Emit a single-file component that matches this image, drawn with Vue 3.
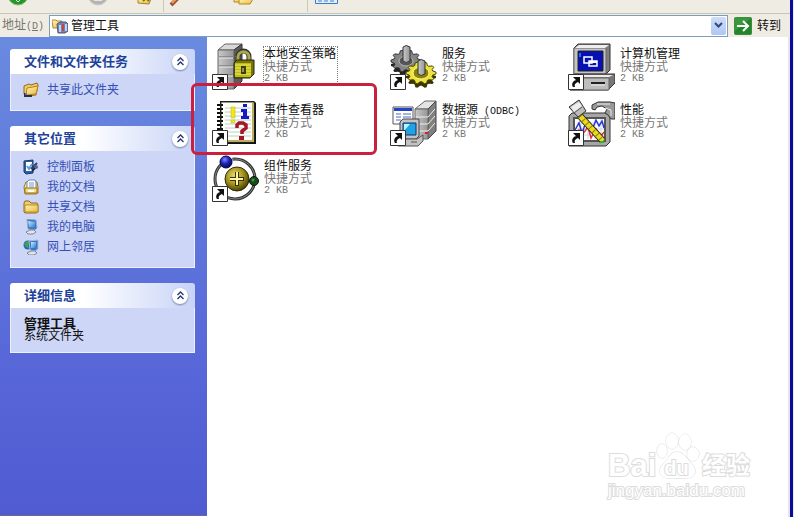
<script setup>
import { ref } from 'vue'

const address = ref('管理工具')

const panels = ref([
  {
    title: '文件和文件夹任务',
    open: true,
    links: [{ icon: 'share', text: '共享此文件夹' }]
  },
  {
    title: '其它位置',
    open: true,
    links: [
      { icon: 'control', text: '控制面板' },
      { icon: 'documents', text: '我的文档' },
      { icon: 'folder', text: '共享文档' },
      { icon: 'computer', text: '我的电脑' },
      { icon: 'network', text: '网上邻居' }
    ]
  },
  {
    title: '详细信息',
    open: true,
    details: { name: '管理工具', kind: '系统文件夹' }
  }
])

const files = [
  { icon: 'security', name: '本地安全策略', focused: true },
  { icon: 'services', name: '服务' },
  { icon: 'management', name: '计算机管理' },
  { icon: 'events', name: '事件查看器', marked: true },
  { icon: 'odbc', name: '数据源', suffix: ' (ODBC)' },
  { icon: 'performance', name: '性能' },
  { icon: 'components', name: '组件服务' }
]

const gearPath = (cx, cy, rx, ry, teeth) => {
  const points = []
  for (let i = 0; i < teeth * 4; i++) {
    const a = ((i - 0.5) / (teeth * 4)) * Math.PI * 2
    const k = i % 4 < 2 ? 1 : 0.8
    points.push(`${(cx + Math.cos(a) * rx * k).toFixed(1)},${(cy + Math.sin(a) * ry * k).toFixed(1)}`)
  }
  return `M${points.join('L')}Z`
}
const grayGear = gearPath(17, 18, 15, 11, 10)
const yellowGear = gearPath(32, 30, 15, 11, 10)
</script>

<template>
  <div class="window">
    <svg class="defs" aria-hidden="true">
      <defs>
        <linearGradient id="metal" x1="0" x2="1"><stop stop-color="#cacaca" /><stop offset="1" stop-color="#959595" /></linearGradient>
        <linearGradient id="gold" x1="0" y1="0" x2="1" y2="1"><stop stop-color="#fff6b0" /><stop offset="1" stop-color="#e9b840" /></linearGradient>
        <linearGradient id="glass" x1="0" y1="0" x2="1" y2="1"><stop stop-color="#c5edff" /><stop offset="1" stop-color="#2a77d2" /></linearGradient>
        <radialGradient id="sphere" cx=".4" cy=".35" r=".7"><stop stop-color="#e8dc6a" /><stop offset=".55" stop-color="#a08d18" /><stop offset="1" stop-color="#3b3403" /></radialGradient>
        <radialGradient id="blueball" cx=".4" cy=".3" r=".7"><stop stop-color="#7d8cff" /><stop offset=".5" stop-color="#1c22c0" /><stop offset="1" stop-color="#080850" /></radialGradient>
      </defs>

      <symbol id="file-security" viewBox="0 0 48 48">
        <path d="M7 7L14 1H31L23 7Z" fill="#d8d8d8" stroke="#666" />
        <path d="M23 7L31 1V38L23 46Z" fill="#5d5d5d" stroke="#333" />
        <path d="M7 7H23V46H7Z" fill="url(#metal)" stroke="#666" />
        <path d="M8 14H22M8 23H22M8 32H22" stroke="#666" />
        <path d="M8 15H22M8 24H22M8 33H22" stroke="#ededed" />
        <path d="M24 14L30 8M24 23L30 17M24 32L30 27" stroke="#999" />
        <path d="M17 42H21" stroke="#e02020" stroke-width="2" />
        <path d="M27 20V14C27 6 38 6 38 14V20" fill="none" stroke="#333" stroke-width="5" />
        <path d="M27 20V14C27 7 38 7 38 14V20" fill="none" stroke="#a9a94c" stroke-width="3" />
        <path d="M23 20L26 17H43V31L39 35H23Z" fill="#7a7700" stroke="#222" />
        <path d="M24 20H40V34H24Z" fill="#bdba1c" />
        <path d="M24 22H40M24 25H40M24 28H40M24 31H40" stroke="#efec5c" />
        <path d="M30 23H35V31H30Z" fill="#424000" /><path d="M32 25V29" stroke="#ddd" />
      </symbol>

      <symbol id="file-events" viewBox="0 0 48 48">
        <path d="M9 2H43L45 4V45H9Z" fill="#111" />
        <path d="M10 3H43V43H10Z" fill="#fffff4" stroke="#333" />
        <path d="M42 4V42H12" fill="none" stroke="#b8b060" stroke-width="2" />
        <path d="M14 9H40M14 13H40M14 17H40M14 21H40M14 25H40M14 29H40M14 33H40M14 37H40" stroke="#b9cede" />
        <path d="M6 6H12M6 10H12M6 14H12M6 18H12M6 22H12M6 26H12M6 30H12" stroke="#111" stroke-width="2" stroke-dasharray="3 1" />
        <path d="M20 8H24V19H20ZM20 21H24V24H20Z" fill="#f4e719" stroke="#b9af20" stroke-width=".5" />
        <path d="M32 5H36V8H32ZM30 10H36V17H38V20H30V17H32V13H30Z" fill="#1718c7" />
        <path d="M26 29V26L28 24H32L35 26V29L31 32V35" fill="none" stroke="#a41628" stroke-width="3.5" /><path d="M28 37H33V41H28Z" fill="#a41628" />
      </symbol>

      <symbol id="file-components" viewBox="0 0 48 48">
        <ellipse cx="24" cy="24" rx="20" ry="20" fill="none" stroke="#333" stroke-width="3" stroke-dasharray="46 3 39 3 35 3" />
        <ellipse cx="24" cy="24" rx="20" ry="20" fill="none" stroke="#858585" />
        <circle cx="26" cy="24" r="12" fill="url(#sphere)" stroke="#302b0b" />
        <path d="M26 17V31M19 24H33" stroke="#393108" stroke-width="4" /><path d="M26 17V30M19 24H32" stroke="#fff5a4" stroke-width="2" />
        <circle cx="15" cy="7" r="6" fill="url(#blueball)" stroke="#050530" />
        <circle cx="43" cy="26" r="4.5" fill="#164c18" stroke="#061606" /><circle cx="42" cy="25" r="1.5" fill="#429743" />
      </symbol>

      <symbol id="file-services" viewBox="0 0 48 48">
        <path :d="grayGear" transform="translate(0 4)" fill="#222" />
        <path :d="grayGear" fill="#858585" stroke="#333" />
        <ellipse cx="17" cy="18" rx="7" ry="5" fill="#555" stroke="#bbb" />
        <path d="M14 4Q17 1 21 4V18Q17 21 14 18Z" fill="url(#metal)" stroke="#333" />
        <path :d="yellowGear" transform="translate(0 4)" fill="#3b3600" />
        <path :d="yellowGear" fill="#eee23c" stroke="#4a4600" />
        <ellipse cx="32" cy="30" rx="8" ry="6" fill="#8b8300" stroke="#fff8a0" />
        <path d="M29 18Q32 15 36 18V31Q32 34 29 31Z" fill="url(#metal)" stroke="#333" />
      </symbol>

      <symbol id="file-odbc" viewBox="0 0 48 48">
        <path d="M4 8H24V25H4Z" fill="#fff" stroke="#555" /><path d="M5 9H23V12H5Z" fill="#2444c5" />
        <path d="M7 15H12M7 18H12M7 21H12M14 15H22M14 18H22M14 21H22" stroke="#4e68b8" />
        <path d="M26 10L36 2H47L39 10Z" fill="#e4e4e4" stroke="#666" />
        <path d="M39 10L47 2V32L39 40Z" fill="#808080" stroke="#444" />
        <path d="M26 10H39V40H26Z" fill="url(#metal)" stroke="#666" />
        <path d="M27 18H39L46 10M27 25H39L46 17M27 32H39L46 24" fill="none" stroke="#eee" />
        <path d="M36 34H39" stroke="#e11d1d" stroke-width="2" />
        <path d="M11 23L14 20H30V37L27 40H11Z" fill="#c4c4c4" stroke="#444" />
        <path d="M14 24H27V36H14Z" fill="#1da3e6" stroke="#113166" /><path d="M15 25L21 25L15 32Z" fill="#bdf2ff" />
        <path d="M13 40H28L34 36V42L29 47H9V43Z" fill="#c2c2c2" stroke="#555" /><path d="M22 43H28" stroke="#555" />
      </symbol>

      <symbol id="file-management" viewBox="0 0 48 48">
        <path d="M7 5L11 1H43V27L38 32H7Z" fill="#808080" stroke="#333" />
        <path d="M7 5H39V31H7Z" fill="#c5c5c5" stroke="#666" /><path d="M8 5L12 2H42L38 5Z" fill="#eee" />
        <path d="M11 8H36V28H11Z" fill="#0711b3" stroke="#222" />
        <path d="M17 14H25V20H17ZM22 18H30V23H22Z" fill="#0711b3" stroke="#fff" stroke-width="1.5" /><path d="M22 18H30V20H22Z" fill="#fff" />
        <path d="M13 10L13 14" stroke="#59c6fc" />
        <path d="M3 34L8 31H48V40L41 47H3Z" fill="#777" stroke="#333" />
        <path d="M3 35H42V47H3Z" fill="#bcbcbc" stroke="#666" /><path d="M5 34L10 32H46L42 34Z" fill="#eee" />
        <path d="M24 40H38" stroke="#222" stroke-width="2" /><path d="M24 42H38" stroke="#eee" />
      </symbol>

      <symbol id="file-performance" viewBox="0 0 48 48">
        <path d="M2 17L5 14H43V43L39 47H2Z" fill="#a6a6a6" stroke="#333" />
        <path d="M7 19H38V42H7Z" fill="#fff" stroke="#555" stroke-width="2" />
        <path d="M10 24H37M10 30H37M10 36H37M14 20V40M21 20V40M28 20V40M34 20V40" stroke="#ccd3e3" />
        <path d="M8 31L12 24L15 34L19 23L25 31L29 21L32 27L35 22L37 29" fill="none" stroke="#2638d2" stroke-width="1.5" />
        <path d="M8 38L12 31L15 36L21 28L24 39L29 30L34 37L37 33" fill="none" stroke="#e53036" stroke-width="1.5" />
        <path d="M13 17L36 42" stroke="#222" stroke-width="7" /><path d="M13 17L36 42" stroke="#eadb20" stroke-width="5" /><path d="M13 17L36 42" stroke="#8c7f00" stroke-width="5" stroke-dasharray="1 4" />
        <path d="M2 8L12 1L19 12L11 18Z" fill="#bdbdbd" stroke="#333" /><path d="M4 8L12 3L15 7L7 13Z" fill="#eee" /><path d="M7 14L15 8" stroke="#555" />
        <path d="M25 10V6L31 3H43L48 4V20H44L41 16L38 14L40 10L35 7L30 8L28 11Z" fill="#999" stroke="#333" /><path d="M30 5H43M38 9L44 11V17" fill="none" stroke="#eee" />
        <path d="M33 43H37" stroke="#23b934" stroke-width="2" />
      </symbol>

      <symbol id="shortcut" viewBox="0 0 16 16">
        <path d="M.5 .5H15.5V15.5H.5Z" fill="#fff" stroke="#333" />
        <path d="M5 3H12V10L10 8C7 9 6 11 7 13H5C3 10 5 7 8 6Z" fill="#111" />
      </symbol>

      <symbol id="place-share" viewBox="0 0 16 16">
        <path d="M1 4L6 2L8 3L14 1L15 3L13 13L4 14L1 12Z" fill="#f0cf68" stroke="#8c6a20" />
        <path d="M4 6L15 4L13 12L3 13Z" fill="url(#gold)" stroke="#b5811b" /><path d="M1 11H4V13H9V15H1Z" fill="#2d303d" /><path d="M2 12H4" stroke="#aebddb" />
      </symbol>
      <symbol id="place-control" viewBox="0 0 16 16">
        <path d="M1 2L10 1V14L3 15L1 13Z" fill="#315f9b" stroke="#173b6b" /><path d="M3 3H9V12H3Z" fill="#fff" />
        <path d="M4 7L6 10L9 5" fill="none" stroke="#5b9bdc" stroke-width="2" /><path d="M8 10L14 4" stroke="#1e4177" stroke-width="2" /><circle cx="13" cy="8" r="2" fill="#576884" /><path d="M9 12L12 9" stroke="#1d2943" stroke-width="2" />
      </symbol>
      <symbol id="place-documents" viewBox="0 0 16 16">
        <path d="M1 8L3 3H14L15 8V14L13 15H2Z" fill="url(#gold)" stroke="#9b7626" /><path d="M4 3L6 1H12L13 3V10H4Z" fill="#fff" stroke="#6d83ac" /><path d="M6 4H11M6 6H11M6 8H11" stroke="#6d9bd5" /><path d="M2 9H14V14H2Z" fill="#f4db82" stroke="#9b7626" /><path d="M5 12H11" stroke="#fff" stroke-width="2" />
      </symbol>
      <symbol id="place-folder" viewBox="0 0 16 16">
        <path d="M1 4L2 2H6L8 4H14L15 6V13L13 14H2L1 13Z" fill="#f0cf68" stroke="#8d691d" /><path d="M2 6H14L15 7V13H2Z" fill="url(#gold)" stroke="#b98b29" />
      </symbol>
      <symbol id="place-computer" viewBox="0 0 16 16">
        <path d="M4 0L13 1L14 9L12 11L5 10Z" fill="#3b74c0" stroke="#96a9cd" /><path d="M5 2L12 3V9L6 8Z" fill="url(#glass)" /><path d="M7 11H11L13 13L10 15H5L3 13Z" fill="#e3e5e9" stroke="#7c8598" />
      </symbol>
      <symbol id="place-network" viewBox="0 0 16 16">
        <circle cx="5" cy="6" r="4.5" fill="#2469b2" /><path d="M1 5L4 2L7 3L5 6L6 9L3 8Z" fill="#44a24d" />
        <path d="M6 2L15 1V10L12 12L7 11Z" fill="#3b74c0" stroke="#a4badb" /><path d="M8 3L13 3V9L8 9Z" fill="url(#glass)" /><path d="M8 12H12L14 14L11 16H6L4 14Z" fill="#e2e3e6" stroke="#7c8598" />
      </symbol>
      <symbol id="tools" viewBox="0 0 16 16">
        <path d="M0 2H4L5 3H10V10H1Z" fill="url(#gold)" stroke="#a88a48" /><path d="M5 6L8 4H14L16 6V13L13 15H6Z" fill="#7084b6" stroke="#4d5775" /><path d="M7 7H9V14H7ZM13 6H15V13H13Z" fill="#c6d1ed" /><path d="M10 6H12V13H10Z" fill="#bd4b45" />
      </symbol>
    </svg>

    <div class="toolbar" role="toolbar" aria-label="标准按钮">
      <svg class="toolbar-art" width="345" height="13" viewBox="0 0 345 13" aria-hidden="true">
        <circle cx="18" cy="-5" r="10" fill="#27962b" stroke="#7fba75" /><path d="M15 -1L18 2L21 -1" stroke="#dff2dc" fill="none" />
        <circle cx="98" cy="-5" r="10" fill="#b4b4b2" stroke="#cecec9" /><path d="M94 0H102" stroke="#e8e8e4" stroke-width="2" />
        <path d="M138 -4H152L149 4L138 3Z" fill="url(#gold)" stroke="#a97e24" /><path d="M143 1L146 -2L149 1" fill="none" stroke="#6b7a24" stroke-width="2" />
        <path d="M163.5 0V12M307.5 0V12" stroke="#cbc8b4" />
        <path d="M171 5L179 -3" stroke="#9b5138" stroke-width="4" /><path d="M172 3L180 -5" stroke="#f49b5b" stroke-width="2" />
        <path d="M234 -4H247V1L244 2H234Z" fill="url(#gold)" stroke="#b78724" /><path d="M239 -1H253L250 4H239Z" fill="url(#gold)" stroke="#b78724" />
        <path d="M315.500 -5H337.500V3.500H315.500Z" fill="#e5f0ff" stroke="#4378bd" /><path d="M318 1H322M324 1H328M330 1H334" stroke="#8db8ea" stroke-width="2" />
      </svg>
    </div>

    <form class="address-bar" @submit.prevent>
      <label class="address-label" for="address">地址<span class="latin">(<u>D</u>)</span></label>
      <div class="combo">
        <svg class="small-icon" aria-hidden="true"><use href="#tools" /></svg>
        <input id="address" v-model="address" class="address-input" type="text" />
        <button class="drop" type="button" aria-label="展开">
          <svg width="9" height="7" viewBox="0 0 9 7" aria-hidden="true"><path d="M1 1L4.500 4.500L8 1" fill="none" stroke="#34486f" stroke-width="2" /></svg>
        </button>
      </div>
      <button class="go" type="submit">
        <svg width="18" height="18" viewBox="0 0 18 18" aria-hidden="true"><rect x=".5" y=".5" width="17" height="17" rx="1" fill="#23852a" stroke="#3f8b43" /><path d="M1 1H17L1 14Z" fill="#48a44c" opacity=".6" /><path d="M3 9H14M9 4L14 9L9 14" fill="none" stroke="#fff" stroke-width="2" /></svg>
        <span>转到</span>
      </button>
    </form>

    <div class="content">
      <aside class="sidebar">
        <section v-for="panel in panels" :key="panel.title" class="panel">
          <header class="panel-header">
            <h2>{{ panel.title }}</h2>
            <button class="collapse" type="button" :aria-label="panel.title" :aria-expanded="panel.open" @click="panel.open = !panel.open">
              <svg width="9" height="9" viewBox="0 0 9 9" aria-hidden="true"><path d="M1.500 4L4.500 1L7.500 4M1.500 8L4.500 5L7.500 8" fill="none" stroke="#26356d" stroke-width="1.300" /></svg>
            </button>
          </header>
          <ul v-if="panel.open && panel.links" class="panel-body links">
            <li v-for="link in panel.links" :key="link.text">
              <a href="#"><svg class="small-icon" aria-hidden="true"><use :href="'#place-' + link.icon" /></svg>{{ link.text }}</a>
            </li>
          </ul>
          <div v-if="panel.open && panel.details" class="panel-body details">
            <strong>{{ panel.details.name }}</strong>
            <span>{{ panel.details.kind }}</span>
          </div>
        </section>
      </aside>

      <main class="files">
        <a v-for="file in files" :key="file.name" href="#" class="file" :class="{ marked: file.marked }">
          <svg class="file-icon" viewBox="0 0 48 48" aria-hidden="true">
            <use :href="'#file-' + file.icon" width="48" height="48" />
            <use href="#shortcut" x="1" y="31" width="16" height="16" />
          </svg>
          <span class="caption" :class="{ focused: file.focused }">
            <span class="name">{{ file.name }}<span v-if="file.suffix" class="latin">{{ file.suffix }}</span></span>
            <span>快捷方式</span>
            <span class="latin">2 KB</span>
          </span>
        </a>
        <div class="watermark">
          <svg class="watermark-paw" width="44" height="48" viewBox="0 0 44 48" aria-hidden="true">
            <g fill="#fff" stroke="#d8d8d8"><ellipse cx="6" cy="19" rx="5" ry="7" /><ellipse cx="16" cy="9" rx="6" ry="8" /><ellipse cx="29" cy="10" rx="6" ry="8" /><ellipse cx="37" cy="22" rx="6" ry="7" /><path d="M21 20C13 20 13 27 7 32C1 38 4 46 12 46H31C39 46 42 38 36 32C30 27 29 20 21 20Z" /></g>
          </svg>
          <div class="watermark-brand"><span>Bai</span><span class="du">du</span><span class="cn">经验</span></div>
          <div class="watermark-site">jingyan.baidu.com</div>
        </div>
      </main>
    </div>
  </div>
</template>

<style>
body {
  background: #e8ebf5;
}
</style>

<style scoped>
.window {
  display: flex;
  flex-direction: column;
  box-sizing: border-box;
  height: 100vh;
  margin-right: 1px;
  border-right: 3px solid #0a0a9c;
  background: #efede3;
  font: 12px/12px "Liberation Sans", "Noto Sans CJK SC", sans-serif;
  color: #111;
}
.defs {
  position: absolute;
  width: 0;
  height: 0;
}
button,
input {
  margin: 0;
  padding: 0;
  border: 0;
  font: inherit;
  color: inherit;
}
a {
  color: inherit;
  text-decoration: none;
}
.latin {
  font-family: "Liberation Mono", monospace;
  font-size: 10px;
  white-space: pre;
}
.small-icon {
  flex: none;
  width: 16px;
  height: 16px;
}
.toolbar {
  flex: none;
  height: 13px;
  border-bottom: 1px solid #c9c6b8;
}
.toolbar-art {
  display: block;
}
.address-bar {
  display: flex;
  flex: none;
  align-items: center;
  height: 23px;
  padding-right: 9px;
}
.address-label {
  flex: none;
  width: 47px;
  padding-left: 2px;
  color: #77766e;
}
.combo {
  display: flex;
  flex: 1;
  align-items: center;
  box-sizing: border-box;
  min-width: 0;
  height: 22px;
  padding: 0 1px 0 2px;
  border: 1px solid #7f9db9;
  background: #fff;
}
.address-input {
  flex: 1;
  min-width: 0;
  padding-left: 3px;
  background: transparent;
  line-height: 16px;
  outline: none;
}
.drop {
  display: grid;
  place-items: center;
  width: 15px;
  height: 18px;
  border-radius: 2px;
  background: linear-gradient(#cddcfb, #afc6f5);
}
.go {
  display: flex;
  align-items: center;
  gap: 5px;
  margin-left: 6px;
  background: transparent;
}
.content {
  display: flex;
  flex: 1;
  min-height: 0;
  background: #fff;
}
.sidebar {
  display: flex;
  flex: none;
  flex-direction: column;
  gap: 15px;
  box-sizing: border-box;
  width: 207px;
  margin-bottom: 1px;
  padding: 12px 12px 12px 10px;
  border-bottom: 1px solid #6a6794;
  background: linear-gradient(#698bdf, #5766d8 70%, #505bd2);
}
.panel-header {
  display: flex;
  align-items: center;
  justify-content: space-between;
  height: 25px;
  padding: 0 7px 0 14px;
  border-radius: 3px 3px 0 0;
  background: linear-gradient(90deg, #fff 40%, #c8d4f7);
}
.panel-header h2 {
  margin: 0;
  font-size: 13px;
  line-height: 16px;
  color: #1e429a;
}
.collapse {
  display: grid;
  place-items: center;
  width: 16px;
  height: 16px;
  border-radius: 50%;
  background: #fff;
  box-shadow: 0 1px 2px #7682a8;
}
.panel-body {
  margin: 0;
  border: 1px solid #eef1fc;
  border-top: 0;
  background: #cdd6f7;
}
.links {
  padding: 6px 12px 10px;
  list-style: none;
}
.links a {
  display: flex;
  align-items: center;
  gap: 8px;
  height: 20px;
  color: #3450b4;
}
.details {
  display: flex;
  flex-direction: column;
  padding: 10px 13px;
}
.details strong {
  font-size: 13px;
}
.files {
  position: relative;
  display: grid;
  flex: 1;
  grid-template-columns: repeat(auto-fill, 178px);
  align-content: start;
  row-gap: 8px;
  min-width: 0;
  padding: 6px 2px 0 4px;
  border-right: 2px solid #e5e4ea;
}
.file {
  position: relative;
  display: flex;
  align-items: flex-start;
  gap: 5px;
}
.file-icon {
  flex: none;
  width: 48px;
  height: 48px;
}
.caption {
  display: flex;
  flex-direction: column;
  margin-top: 4px;
  padding: 1px 1px 0 0;
  color: #777;
  white-space: nowrap;
}
.caption .name {
  height: 13px;
  line-height: 13px;
  color: #111;
}
.caption .latin {
  line-height: 12px;
}
.focused {
  outline: 1px dotted #777;
}
.marked::after {
  content: "";
  position: absolute;
  top: -16px;
  left: -20px;
  z-index: 1;
  box-sizing: border-box;
  width: 186px;
  height: 72px;
  border: 3px solid #c9203e;
  border-radius: 6px;
}
.watermark {
  position: absolute;
  right: 38px;
  bottom: 17px;
  width: 142px;
  color: #fff;
  -webkit-text-stroke: 2px #dcdcdc;
  paint-order: stroke fill;
}
.watermark-paw {
  position: absolute;
  top: 0;
  left: 48px;
}
.watermark-brand {
  position: relative;
  display: flex;
  align-items: flex-end;
  padding-top: 18px;
  font-size: 31px;
  font-weight: bold;
  line-height: 32px;
}
.watermark .du {
  padding-left: 8px;
  font-size: 20px;
  line-height: 28px;
}
.watermark .cn {
  margin-left: auto;
  font-size: 24px;
}
.watermark-site {
  position: relative;
  font-size: 17px;
  line-height: 18px;
}
</style>
